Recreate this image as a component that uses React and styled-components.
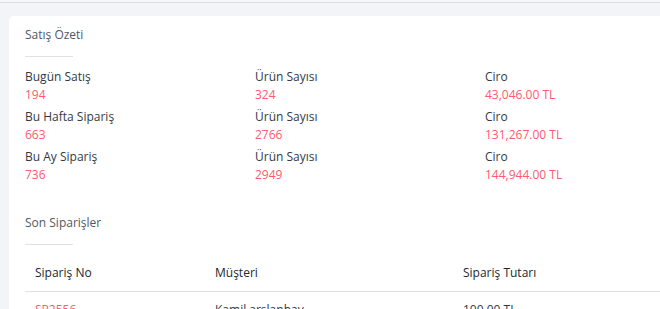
import React from 'react';
import styled, { createGlobalStyle } from 'styled-components';

const GlobalStyle = createGlobalStyle`
  html, body {
    margin: 0;
    padding: 0;
    overflow: hidden;
    background: #f3f4f8;
    font-family: "Open Sans", "Noto Sans", sans-serif;
    font-size: 12px;
    color: #313a46;
  }
`;

const TopBar = styled.div`
  height: 2px;
  background: #f5f6fa;
  border-bottom: 1px solid #dcdde3;
`;

const Content = styled.div`
  padding: 13px 0 0 9px;
`;

const Card = styled.div`
  width: 722px;
  background: #fff;
  border-radius: 5px;
  padding: 10px 16px 0;
  box-sizing: border-box;
`;

const SectionTitle = styled.h4`
  margin: ${(p) => (p.first ? '0' : '31px')} 0 0;
  font-size: 12px;
  font-weight: 400;
  line-height: 17px;
  color: #4f5864;
`;

const Rule = styled.div`
  width: 48px;
  height: 1px;
  background: #dee2e6;
  margin-top: 13px;
`;

const StatsGrid = styled.div`
  display: grid;
  grid-template-columns: repeat(3, 230px);
  row-gap: 5px;
  margin-top: 11px;
`;

const Stat = styled.div`
  display: flex;
  flex-direction: column;
  line-height: 17.5px;
`;

const Label = styled.span`
  color: #313a46;
`;

const Value = styled.span`
  color: #fc5b6e;
`;

const Table = styled.table`
  width: 100%;
  border-collapse: collapse;
  margin-top: 9px;
`;

const Th = styled.th`
  text-align: left;
  font-weight: 400;
  color: #212730;
  line-height: 17px;
  padding: 10px 10px 10px;
  border-bottom: 1px solid #dee2e6;
  width: ${(p) => p.w || 'auto'};
`;

const Td = styled.td`
  line-height: 17px;
  padding: 9px 10px;
  color: ${(p) => (p.accent ? '#fc5b6e' : '#313a46')};
`;

const stats = [
  { label: 'Bugün Satış', value: '194', count: '324', revenue: '43,046.00 TL' },
  { label: 'Bu Hafta Sipariş', value: '663', count: '2766', revenue: '131,267.00 TL' },
  { label: 'Bu Ay Sipariş', value: '736', count: '2949', revenue: '144,944.00 TL' },
];

const orders = [{ no: 'SP2556', customer: 'Kamil arslanbay', total: '100,00 TL' }];

export default function App() {
  return (
    <>
      <GlobalStyle />
      <TopBar />
      <Content>
        <Card>
          <SectionTitle first>Satış Özeti</SectionTitle>
          <Rule />
          <StatsGrid>
            {stats.map((s) => (
              <React.Fragment key={s.label}>
                <Stat>
                  <Label>{s.label}</Label>
                  <Value>{s.value}</Value>
                </Stat>
                <Stat>
                  <Label>Ürün Sayısı</Label>
                  <Value>{s.count}</Value>
                </Stat>
                <Stat>
                  <Label>Ciro</Label>
                  <Value>{s.revenue}</Value>
                </Stat>
              </React.Fragment>
            ))}
          </StatsGrid>

          <SectionTitle>Son Siparişler</SectionTitle>
          <Rule />
          <Table>
            <thead>
              <tr>
                <Th w="160px">Sipariş No</Th>
                <Th w="228px">Müşteri</Th>
                <Th>Sipariş Tutarı</Th>
              </tr>
            </thead>
            <tbody>
              {orders.map((o) => (
                <tr key={o.no}>
                  <Td accent>{o.no}</Td>
                  <Td>{o.customer}</Td>
                  <Td>{o.total}</Td>
                </tr>
              ))}
            </tbody>
          </Table>
        </Card>
      </Content>
    </>
  );
}
